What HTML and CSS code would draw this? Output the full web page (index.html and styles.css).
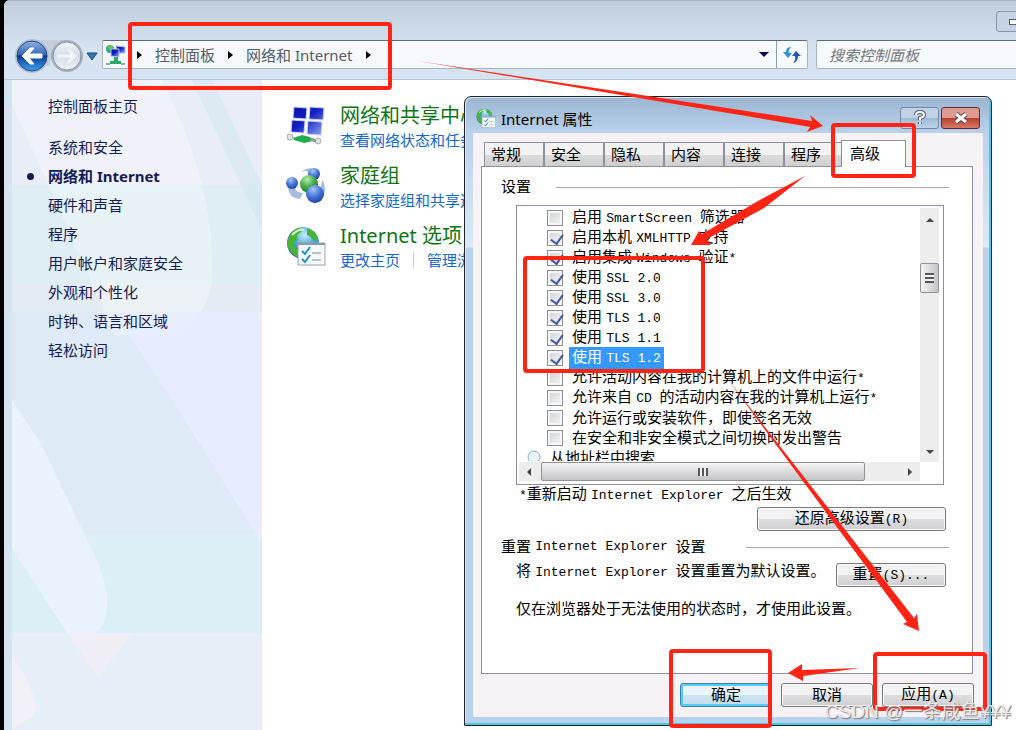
FILE: index.html
```html
<!DOCTYPE html>
<html lang="zh-CN">
<head>
<meta charset="UTF-8">
<title>网络和 Internet</title>
<link rel="stylesheet" href="styles.css">
</head>
<body>

<!-- Shared icons -->
<svg class="defs" width="0" height="0" aria-hidden="true">
  <defs>
    <radialGradient id="gBlue" cx=".4" cy=".25" r=".8"><stop offset="0" stop-color="#a9c8f6"/><stop offset=".5" stop-color="#4a78d8"/><stop offset="1" stop-color="#1b3a9c"/></radialGradient>
    <radialGradient id="gGreen" cx=".4" cy=".25" r=".8"><stop offset="0" stop-color="#b5eeb0"/><stop offset=".5" stop-color="#46ac4a"/><stop offset="1" stop-color="#157427"/></radialGradient>
    <radialGradient id="gSea" cx=".55" cy=".25" r=".8"><stop offset="0" stop-color="#c2ecfb"/><stop offset=".5" stop-color="#3f9fd8"/><stop offset="1" stop-color="#174f9c"/></radialGradient>
    <linearGradient id="gScreen" x1="0" y1="0" x2="1" y2="1"><stop offset="0" stop-color="#0a12a8"/><stop offset=".45" stop-color="#1420c4"/><stop offset="1" stop-color="#90a8f0"/></linearGradient>
    <linearGradient id="gBack" x1="0" y1="0" x2="0" y2="1"><stop offset="0" stop-color="#8fb4e2"/><stop offset=".45" stop-color="#3468b8"/><stop offset=".5" stop-color="#0c3a94"/><stop offset="1" stop-color="#38a4ee"/></linearGradient>
    <linearGradient id="gFwd" x1="0" y1="0" x2="0" y2="1"><stop offset="0" stop-color="#f4f7fb"/><stop offset=".5" stop-color="#d3dbe6"/><stop offset="1" stop-color="#eef3f9"/></linearGradient>
    <symbol id="inet" viewBox="0 0 40 40">
      <circle cx="17" cy="17" r="16" fill="url(#gSea)"/>
      <path d="M4 8Q8 3 13 2L16 5 11 9 12 14 7 17 10 22 13 26 11 31Q2 26 1 17ZM21 2Q29 4 32 12L28 15 25 11 21 9ZM14 24L18 22 19 31 14 32Z" fill="#48b433"/>
      <path d="M6 9Q12 3 18 4" fill="none" stroke="#d8f6c0" stroke-width="2"/>
      <path d="M12 17H39V39H12Z" fill="#f7fafd" stroke="#9aa4ae"/>
      <path d="M12 17H39V19H12Z" fill="#8d99a5"/>
      <path d="M16 25L19 28 24 21M16 33L19 36 24 29" fill="none" stroke="#1c91bd" stroke-width="2"/>
      <path d="M26 27H35M26 34H35" stroke="#7c8898" stroke-width="1"/>
    </symbol>
  </defs>
</svg>

<div class="explorer">
  <div class="header">
    <div class="caption"><button class="minimize" aria-label="最小化"><i></i></button></div>
    <div class="toolbar">
      <div class="travel">
        <svg width="82" height="38" viewBox="0 0 82 38">
          <path d="M18 4H54V8Q36 14 36 30H18Z" fill="#c3cfdd"/>
          <circle cx="18" cy="20" r="17" fill="#b3c1d2"/><circle cx="53" cy="20" r="16" fill="#a4afbd"/>
          <circle cx="18" cy="20" r="15" fill="url(#gBack)" stroke="#28447c"/>
          <circle cx="53" cy="20" r="14" fill="url(#gFwd)" stroke="#8792a0"/>
          <path d="M8 20L16 12H20L15 18H28V22H15L20 28H16Z" fill="#fff" stroke="#fff"/>
          <path d="M63 20L55 12H51L56 18H43V22H56L51 28H55Z" fill="#f0f3f7" stroke="#dde3ea"/>
          <path d="M73 17H83L78 24Z" fill="#2f79ae" stroke="#164b7c"/>
        </svg>
      </div>
      <div class="address">
        <svg class="place" width="22" height="22" viewBox="0 0 22 22">
          <circle cx="5" cy="5" r="4" fill="#35a4a0"/><path d="M2 4L5 1 8 3 6 6Z" fill="#74c740"/>
          <path d="M11 2L20 3V9H12Z" fill="url(#gScreen)" stroke="#a9b6d6"/>
          <path d="M6 5H14V13L6 12Z" fill="url(#gScreen)" stroke="#b4c4dd"/>
          <path d="M9 13H13V17H16V20H5V17H9Z" fill="#2aa867"/><path d="M1 20H5M16 20H20" stroke="#9ba7a6" stroke-width="2"/>
        </svg>
        <i class="chev"></i><a href="#">控制面板</a>
        <i class="chev"></i><a href="#">网络和 Internet</a>
        <i class="chev"></i>
        <button class="drop" aria-label="以前的位置"></button>
        <button class="refresh" aria-label="刷新">
          <svg width="20" height="18" viewBox="0 0 20 18"><path d="M9 1Q4 1 4 6H1L6 12 10 7H7Q6 4 9 1Z" fill="#2f92d6"/><path d="M11 17Q16 16 16 10H19L14 5 10 10H13Q14 14 11 17Z" fill="#2557ac"/></svg>
        </button>
      </div>
      <input class="search" type="text" placeholder="搜索控制面板" aria-label="搜索控制面板">
    </div>
  </div>

  <div class="content">
    <div class="sidebar">
      <svg class="aurora" viewBox="0 0 250 650" preserveAspectRatio="none" aria-hidden="true">
        <path d="M0 0H250V105H0Z" fill="#e8edf7"/>
        <path d="M0 105H250V203H0Z" fill="#dfeef4"/>
        <path d="M0 203H250V232H0Z" fill="#e4ecf3"/>
        <path d="M0 232H250V454H0Z" fill="#deeaf6"/>
        <path d="M0 454H250V553H0Z" fill="#dceff6"/>
        <path d="M0 553H250V650H0Z" fill="#e6eef8"/>
        <path d="M0 25V0H150Q205 110 200 200Q195 245 150 255H102Q40 110 0 25Z" fill="#fff" opacity=".3"/>
        <path d="M180 0L250 150V105L200 0Z" fill="#cfe4ee" opacity=".5"/>
        <path d="M102 232H250V465L235 440 160 320 140 290Z" fill="#e9edff" opacity=".8"/>
        <path d="M0 320L30 365 75 460Q110 525 85 553H55L0 468Z" fill="#ebf4ff" opacity=".8"/>
        <path d="M55 553H119L87 598Z" fill="#f2eff5" opacity=".8"/>
        <path d="M0 575Q30 620 22 635L0 650Z" fill="#f1f1f7"/>
      </svg>
      <ul class="nav">
        <li class="home"><a href="#">控制面板主页</a></li>
        <li><a href="#">系统和安全</a></li>
        <li class="current"><a href="#">网络和 Internet</a></li>
        <li><a href="#">硬件和声音</a></li>
        <li><a href="#">程序</a></li>
        <li><a href="#">用户帐户和家庭安全</a></li>
        <li><a href="#">外观和个性化</a></li>
        <li><a href="#">时钟、语言和区域</a></li>
        <li><a href="#">轻松访问</a></li>
      </ul>
    </div>

    <div class="main">
      <div class="category">
        <svg width="40" height="40" viewBox="0 0 40 40">
          <path d="M8 1L21 2 20 13 7 12ZM24 1L38 2 37 14 23 13ZM6 14L19 15 18 27 5 26ZM22 15L36 16 35 29 21 28Z" fill="url(#gScreen)" stroke="#c5cfee"/>
          <circle cx="4" cy="31" r="3" fill="#dce2e0" stroke="#a6b1ad"/><circle cx="32" cy="35" r="3" fill="#dce2e0" stroke="#a6b1ad"/>
          <path d="M7 32L16 29 24 31 27 35 18 37 8 34Z" fill="#1fae4c"/><path d="M24 33L30 35" stroke="#8c9995" stroke-width="3"/>
        </svg>
        <div><h2><a href="#">网络和共享中心</a></h2><p><a href="#">查看网络状态和任务</a></p></div>
      </div>
      <div class="category">
        <svg width="40" height="40" viewBox="0 0 40 40">
          <path d="M15 6Q24-1 32 5L28 10Q21 3 15 6ZM2 20Q2 32 14 33L17 27Q9 27 8 18ZM36 13Q43 25 34 33L30 29Q36 22 36 13Z" fill="#a7bde0"/>
          <circle cx="28" cy="8" r="6" fill="url(#gBlue)"/><circle cx="6" cy="17" r="6" fill="url(#gBlue)"/>
          <circle cx="23" cy="18" r="9" fill="url(#gGreen)"/><circle cx="29" cy="28" r="9" fill="url(#gBlue)"/>
        </svg>
        <div><h2><a href="#">家庭组</a></h2><p><a href="#">选择家庭组和共享选项</a></p></div>
      </div>
      <div class="category">
        <svg width="40" height="40"><use href="#inet"/></svg>
        <div><h2><a href="#">Internet 选项</a></h2><p><a href="#">更改主页</a><i class="sep"></i><a href="#">管理浏览器加载项</a></p></div>
      </div>
    </div>
  </div>
</div>

<!-- Internet Properties -->
<div class="dialog">
  <div class="titlebar">
    <svg width="20" height="20"><use href="#inet"/></svg>
    <span class="title">Internet 属性</span>
    <button class="help" aria-label="帮助"><svg width="14" height="16" viewBox="0 0 14 16"><path d="M3 5Q3 2 7 2T11 5Q11 7 7 8V10M7 12V14" fill="none" stroke="#4d5a6b" stroke-width="4"/><path d="M3 5Q3 2 7 2T11 5Q11 7 7 8V10M7 12V14" fill="none" stroke="#fff" stroke-width="2"/></svg></button>
    <button class="close" aria-label="关闭"><svg width="14" height="12" viewBox="0 0 14 12"><path d="M2 2L12 10M12 2L2 10" stroke="#554246" stroke-width="5"/><path d="M2 2L12 10M12 2L2 10" stroke="#fff" stroke-width="3"/></svg></button>
  </div>
  <div class="client">
    <div class="tabs">
      <button>常规</button><button>安全</button><button>隐私</button><button>内容</button><button>连接</button><button>程序</button><button class="active">高级</button>
    </div>
    <div class="panel">
      <div class="group">设置<i></i></div>
      <div class="listbox">
        <div class="list">
          <label><input type="checkbox"><span>启用 <b>SmartScreen </b>筛选器</span></label>
          <label><input type="checkbox" checked><span>启用本机 <b>XMLHTTP </b>支持</span></label>
          <label><input type="checkbox" checked><span>启用集成 <b>Windows </b>验证<b>*</b></span></label>
          <label><input type="checkbox" checked><span>使用 <b>SSL 2.0</b></span></label>
          <label><input type="checkbox" checked><span>使用 <b>SSL 3.0</b></span></label>
          <label><input type="checkbox" checked><span>使用 <b>TLS 1.0</b></span></label>
          <label><input type="checkbox" checked><span>使用 <b>TLS 1.1</b></span></label>
          <label><input type="checkbox" checked><span class="selected">使用 <b>TLS 1.2</b></span></label>
          <label><input type="checkbox"><span>允许活动内容在我的计算机上的文件中运行<b>*</b></span></label>
          <label><input type="checkbox"><span>允许来自 <b>CD </b>的活动内容在我的计算机上运行<b>*</b></span></label>
          <label><input type="checkbox"><span>允许运行或安装软件，即使签名无效</span></label>
          <label><input type="checkbox"><span>在安全和非安全模式之间切换时发出警告</span></label>
          <div class="heading"><svg width="16" height="16" viewBox="0 0 16 16"><circle cx="8" cy="7" r="6" fill="#e6f4fc" stroke="#8fa8bd"/><path d="M4 12L2 15" stroke="#a88e70" stroke-width="2"/></svg><span>从地址栏中搜索</span></div>
        </div>
        <div class="vbar"><i class="up"></i><div class="thumb"></div><i class="down"></i></div>
        <div class="hbar"><i class="left"></i><div class="thumb"></div><i class="right"></i></div>
      </div>
      <p class="note"><b>*</b>重新启动 <b>Internet Explorer </b>之后生效</p>
      <div class="right-row"><button class="btn wide">还原高级设置<b>(R)</b></button></div>
      <div class="group reset">重置 <b>Internet Explorer </b>设置<i></i></div>
      <div class="reset-row"><p>将 <b>Internet Explorer </b>设置重置为默认设置。</p><button class="btn medium">重置<b>(S)...</b></button></div>
      <p class="warn">仅在浏览器处于无法使用的状态时，才使用此设置。</p>
    </div>
    <div class="actions">
      <button class="btn default">确定</button>
      <button class="btn">取消</button>
      <button class="btn">应用<b>(A)</b></button>
    </div>
  </div>
</div>

<!-- Step markers -->
<svg class="marks" width="1016" height="730" viewBox="0 0 1016 730" aria-hidden="true">
  <g fill="none" stroke="#ff2414" stroke-width="4">
    <rect x="130" y="24" width="260" height="64" rx="2"/>
    <rect x="833" y="125" width="81" height="51" rx="2"/>
    <rect x="525" y="258" width="178" height="113" rx="2"/>
    <rect x="671" y="651" width="99" height="75" rx="2"/>
    <rect x="875" y="654" width="110" height="55" rx="2"/>
  </g>
  <g fill="#ff2414">
    <path d="M418 61L740 110 812 121 810 115 823 126 807 132 810 127 740 115Z"/>
    <path d="M805 176L764 208 707 239 711 245 691 245 699 231 702 234 758 201Z"/>
    <path d="M726 377L914 618 917 614 919 631 903 624 907 622Z"/>
    <path d="M860 668L803 676 803 681 788 673 802 664 802 670Z"/>
  </g>
</svg>
<div class="watermark">CSDN @一条咸鱼¥¥¥</div>

</body>
</html>
```
FILE: styles.css
```css
*{
   box-sizing:border-box;
}
body{
   position:relative;
   margin:0;
   min-height:100vh;
   overflow:hidden;
   background:#000;
   font-family:"Noto Sans","Noto Sans CJK SC",sans-serif;
   font-size:15px;
   color:#000;
}
button,input{
   font:inherit;
   color:inherit;
   margin:0;
   padding:0;
}
a{
   color:inherit;
   text-decoration:none;
}
h2,p,ul{
   margin:0;
   padding:0;
   font-weight:400;
}
svg{
   display:block;
   flex:none;
}
.defs{
   position:absolute;
}

/* Explorer window */
.explorer{
   display:flex;
   flex-direction:column;
   min-height:100vh;
   margin-left:4px;
   padding-left:8px;
   background:#d6e4f1;
   border-top-left-radius:6px;
   overflow:hidden;
}
.header{
   height:80px;
   margin-left:-8px;
   padding-left:8px;
   border-top:1px solid #a9b7c4;
   border-bottom:1px solid #b4c2d0;
   background:linear-gradient(#c0cddb,#d6e4f1 50px);
}
.caption{
   display:flex;
   justify-content:flex-end;
   height:38px;
   padding-top:10px;
}
.minimize{
   width:32px;
   height:21px;
   margin-right:-12px;
   padding-left:12px;
   border:1px solid #8796ab;
   border-radius:3px 0 0 3px;
   background:#c5d3e2;
}
.minimize i{
   display:block;
   width:14px;
   height:6px;
   border:1px solid #555f6c;
   background:#fff;
}
.toolbar{
   display:flex;
   align-items:flex-start;
}
.travel{
   width:90px;
   padding-left:2px;
   margin-top:-3px;
}
.travel svg{
   overflow:visible;
}
.address{
   display:flex;
   align-items:center;
   flex:1;
   height:29px;
   margin-top:1px;
   border:1px solid #a7b3c1;
   border-top-color:#5e6875;
   border-radius:2px;
   background:#f6f9fd;
   color:#525b66;
}
.place{
   margin:0 -3px 0 2px;
}
.chev{
   margin:0 13px;
   border:4px solid transparent;
   border-left:5px solid #000;
   border-right:0;
}
.drop{
   width:24px;
   height:27px;
   margin-left:auto;
   border:0;
   background:none;
}
.drop::before{
   content:"";
   display:block;
   width:0;
   margin:auto;
   border:5px solid transparent;
   border-top-color:#04045e;
   border-bottom:0;
}
.refresh{
   width:31px;
   height:27px;
   border:0;
   border-left:1px solid #8f9bab;
   background:none;
   padding-left:5px;
}
.search{
   width:212px;
   height:29px;
   margin:1px -12px 0 8px;
   padding-left:12px;
   border:1px solid #a7b3c1;
   border-top-color:#5e6875;
   border-radius:2px;
   background:#f6f9fd;
}
.search::placeholder{
   color:#75787c;
   font-style:italic;
   opacity:1;
}
.content{
   display:flex;
   flex:1;
}
.sidebar{
   position:relative;
   width:250px;
}
.aurora{
   position:absolute;
   width:100%;
   height:100%;
}
.nav{
   position:relative;
   padding:12px 0 0 36px;
   list-style:none;
   line-height:29px;
   color:#151c55;
}
.home{
   margin-bottom:12px;
}
.current{
   font-weight:700;
}
.current::before{
   content:"";
   float:left;
   width:7px;
   height:7px;
   margin:11px 0 0 -21px;
   border-radius:50%;
   background:#151c55;
}
.main{
   flex:1;
   padding:24px;
   background:#fff;
   white-space:nowrap;
}
.category{
   display:flex;
   gap:14px;
   height:60px;
}
.category > svg{
   margin-top:2px;
}
.category h2{
   font-size:20px;
   line-height:24px;
   color:#0f7414;
}
.category p{
   display:flex;
   align-items:center;
   line-height:24px;
   color:#1468cc;
}
.sep{
   width:1px;
   height:16px;
   margin:0 13px;
   background:#c9ccd2;
}

/* Dialog window */
.dialog{
   position:absolute;
   top:96px;
   left:464px;
   width:528px;
   padding:0 8px 8px;
   border:1px solid #1d2329;
   border-radius:7px 7px 0 0;
   box-shadow:inset -2px -2px #4ac6e6,inset 1px 1px #dbe8f4;
   background:linear-gradient(#9bb5d2,#b9d1ea 36px,#dce9f6 150px,#b9d1ea 151px);
}
.titlebar{
   display:flex;
   align-items:center;
   height:36px;
   padding:6px 3px 0;
}
.title{
   flex:1;
   padding-left:5px;
}
.help,.close{
   display:flex;
   align-items:center;
   justify-content:center;
   width:39px;
   height:22px;
   border:1px solid #7288a6;
   border-radius:3px;
   background:linear-gradient(#c1d2e5 50%,#9fb7d2 50%,#bdd3e9);
}
.close{
   margin-left:2px;
   border-color:#64242c;
   background:linear-gradient(#dc9a90 50%,#b93e2c 50%,#d67a64);
}
.client{
   padding:7px 10px 10px 8px;
   background:#f6f2f6;
   font-family:"Liberation Sans","Noto Sans CJK SC",sans-serif;
}
.client b{
   font-family:"Liberation Mono","Noto Sans CJK SC",monospace;
   font-size:13px;
   font-weight:400;
   white-space:pre;
}
.tabs{
   display:flex;
   align-items:flex-end;
   padding-left:3px;
}
.tabs button{
   width:60px;
   height:24px;
   padding-left:6px;
   border:1px solid #8e8f9c;
   border-width:1px 1px 0 1px;
   background:linear-gradient(#f2f2f2 50%,#dcdcdc 50%,#cfcfcf);
   line-height:22px;
   text-align:left;
}
.tabs .active{
   position:relative;
   width:65px;
   height:27px;
   margin:0 0 -1px -3px;
   padding-left:8px;
   background:#fff;
}
.panel{
   height:508px;
   padding:8px 23px 0 19px;
   border:1px solid #8e8f9c;
   background:#fff;
}
.group{
   display:flex;
   align-items:center;
   line-height:24px;
   white-space:pre;
}
.group i{
   flex:1;
   height:1px;
   margin-left:25px;
   background:#a5a7ad;
}
.listbox{
   display:grid;
   grid-template-columns:1fr 19px;
   grid-template-rows:1fr 19px;
   height:280px;
   margin:6px 5px 0 15px;
   padding:2px 4px 3px 2px;
   border:1px solid #8e8f9c;
   background:#fff;
}
.list{
   height:253px;
   overflow:hidden;
   line-height:20px;
   white-space:nowrap;
}
.list label{
   display:flex;
   align-items:center;
   height:20px;
   padding-left:28px;
}
.list label span{
   margin-left:6px;
   padding:0 3px;
}
.list .selected{
   background:#3399ff;
   color:#fff;
}
.list input{
   appearance:none;
   width:16px;
   height:16px;
   border:1px solid #8b8e93;
   box-shadow:inset 0 0 0 2px #f7f7f7;
   background:linear-gradient(135deg,#cdd1d6,#f5f6f7);
}
.list input:checked::after{
   content:"";
   display:block;
   width:6px;
   height:10px;
   margin:1px 0 0 5px;
   border:solid #4257a0;
   border-width:0 2px 2px 0;
   transform:rotate(35deg);
}
.heading{
   display:flex;
   align-items:center;
   gap:8px;
   height:20px;
   padding-left:7px;
}
.vbar{
   display:flex;
   flex-direction:column;
   align-items:center;
   padding:8px 0;
   background:#eeedee;
}
.hbar{
   display:flex;
   align-items:center;
   padding:0 8px;
   background:#eeedee;
}
.vbar i,.hbar i{
   border:4px solid transparent;
}
.vbar .up{
   border-bottom-color:#444;
   border-top:0;
   margin-top:2px;
}
.vbar .down{
   border-top-color:#444;
   border-bottom:0;
   margin-top:auto;
}
.hbar .left{
   border-right-color:#444;
   border-left:0;
}
.hbar .right{
   border-left-color:#444;
   border-right:0;
   margin-left:auto;
}
.thumb{
   display:flex;
   align-items:center;
   justify-content:center;
   border:1px solid #929296;
   border-radius:2px;
}
.vbar .thumb{
   width:19px;
   height:30px;
   margin-top:41px;
   background:linear-gradient(90deg,#f5f5f5,#dcdcde 50%,#c4c4c9);
}
.hbar .thumb{
   width:324px;
   height:19px;
   margin-left:10px;
   background:linear-gradient(#f5f5f5,#dcdcde 50%,#c4c4c9);
}
.thumb::before{
   content:"";
   width:9px;
   height:10px;
   background:repeating-linear-gradient(#55565a 0 2px,#f2f2f2 2px 4px);
}
.hbar .thumb::before{
   width:10px;
   height:8px;
   background:repeating-linear-gradient(90deg,#55565a 0 2px,#f2f2f2 2px 4px);
}
.note{
   padding-left:18px;
   line-height:18px;
}
.right-row{
   display:flex;
   justify-content:flex-end;
   margin:2px 3px 0 0;
}
.btn{
   width:92px;
   height:24px;
   border:1px solid #77787c;
   border-radius:3px;
   box-shadow:inset 0 0 0 1px #fafafa;
   background:linear-gradient(#f2f2f2 50%,#dddde0 50%,#cfcfd2);
   line-height:20px;
}
.wide{
   width:189px;
}
.medium{
   width:110px;
}
.default{
   border-color:#3d7fb0;
   box-shadow:inset 0 0 0 2px #53cdf5;
   background:linear-gradient(#e9f4fb 50%,#cde4f4 50%,#c0dcef);
}
.reset{
   margin-top:4px;
}
.reset i{
   margin-left:40px;
}
.reset-row{
   display:flex;
   justify-content:space-between;
   padding:4px 3px 0 15px;
   line-height:15px;
}
.warn{
   padding:12px 0 0 15px;
   line-height:20px;
}
.actions{
   display:flex;
   justify-content:flex-end;
   gap:9px;
   margin:9px -1px 0 0;
}

/* Markers over the windows */
.marks{
   position:absolute;
   top:0;
   left:0;
   pointer-events:none;
}
.watermark{
   position:absolute;
   top:700px;
   left:825px;
   font-family:"Liberation Sans","Noto Sans CJK SC",sans-serif;
   font-size:19px;
   line-height:24px;
   color:#e8e8e8;
   text-shadow:1px 1px 1px #777;
   white-space:nowrap;
}
```
